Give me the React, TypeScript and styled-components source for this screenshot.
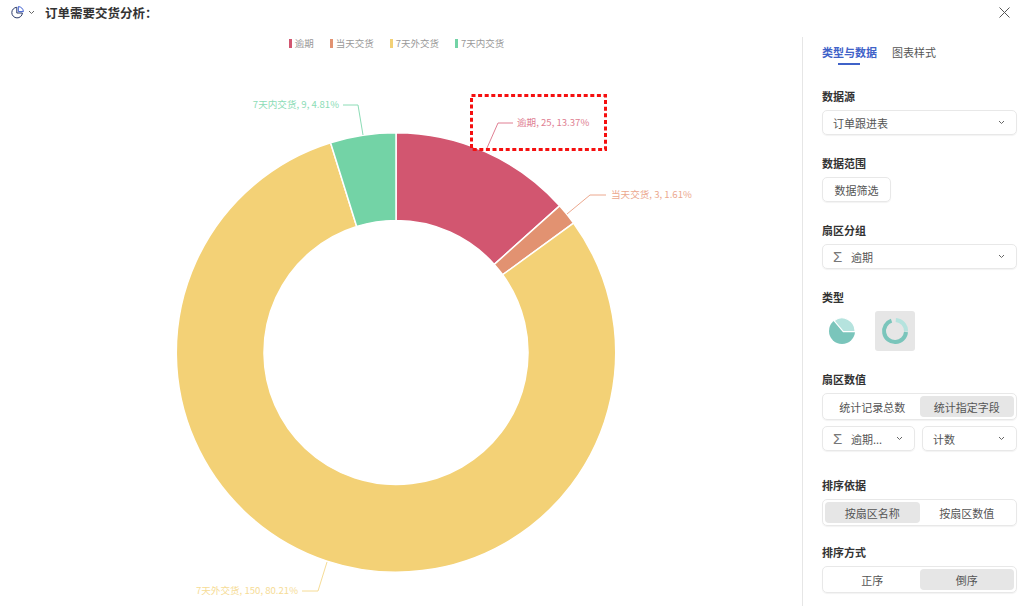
import React from "react";
import styled, { createGlobalStyle } from "styled-components";

const CX = 396;
const CY = 352.5;
const OUTER = 219.7;
const INNER = 132;

const slices = [
  { name: "逾期", value: 25, color: "#d25670" },
  { name: "当天交货", value: 3, color: "#e29271" },
  { name: "7天外交货", value: 150, color: "#f3d176" },
  { name: "7天内交货", value: 9, color: "#73d3a6" },
];

const labels = [
  { text: "逾期, 25, 13.37%", x: 517, y: 126, anchor: "start", color: "#e07f93", points: "487,148 498,123 513,123" },
  { text: "当天交货, 3, 1.61%", x: 611, y: 198, anchor: "start", color: "#eca88e", points: "567,214 590,195 606,195" },
  { text: "7天外交货, 150, 80.21%", x: 298, y: 594, anchor: "end", color: "#f6dc96", points: "327,562 318,591 302,591" },
  { text: "7天内交货, 9, 4.81%", x: 339, y: 108, anchor: "end", color: "#8cdcb6", points: "363,135 358,105 343,105" },
];

const polar = (r: number, deg: number) => {
  const a = ((deg - 90) * Math.PI) / 180;
  return `${CX + r * Math.cos(a)} ${CY + r * Math.sin(a)}`;
};

const arcPath = (from: number, to: number) => {
  const large = to - from > 180 ? 1 : 0;
  return `M${polar(OUTER, from)} A${OUTER} ${OUTER} 0 ${large} 1 ${polar(OUTER, to)} L${polar(INNER, to)} A${INNER} ${INNER} 0 ${large} 0 ${polar(INNER, from)} Z`;
};

const Donut = () => {
  const total = slices.reduce((sum, s) => sum + s.value, 0);
  let angle = 0;
  return (
    <ChartSvg viewBox="0 37 802 569" width={802} height={569}>
      {slices.map((s) => {
        const from = angle;
        angle += (s.value / total) * 360;
        return <path key={s.name} d={arcPath(from, angle)} fill={s.color} stroke="#fff" strokeWidth={1.5} />;
      })}
      {labels.map((l) => (
        <g key={l.text}>
          <polyline points={l.points} fill="none" stroke={l.color} strokeWidth={1} />
          <text x={l.x} y={l.y} textAnchor={l.anchor as "start" | "end"} fill={l.color} fontSize={9.6}>
            {l.text}
          </text>
        </g>
      ))}
      <rect x={471.5} y={95.5} width={134} height={54} fill="none" stroke="#f50f0f" strokeWidth={3} strokeDasharray="4 2.6" />
    </ChartSvg>
  );
};

const Chevron = () => (
  <svg width="7" height="5" viewBox="0 0 7 5" fill="none" stroke="#666" strokeWidth="1">
    <path d="M1 1 L3.5 3.5 L6 1" />
  </svg>
);

const Sigma = () => <SigmaMark>Σ</SigmaMark>;

const App = () => {
  return (
    <Page>
      <GlobalStyle />
      <Header>
        <svg width="13" height="13" viewBox="0 0 13 13" fill="none" strokeWidth="1">
          <path d="M5.8 1.3 A5.3 5.3 0 1 0 11.4 7 L5.8 7 Z" stroke="#2b3a67" />
          <path d="M7.3 0.6 A5.2 5.2 0 0 1 12.4 5.6 L7.3 5.6 Z" stroke="#3f5fd0" />
        </svg>
        <HeaderChevron>
          <Chevron />
        </HeaderChevron>
        <Title>订单需要交货分析：</Title>
        <CloseButton>
          <svg width="11" height="11" viewBox="0 0 11 11" stroke="#555" strokeWidth="1">
            <path d="M0.5 0.5 L10.5 10.5 M10.5 0.5 L0.5 10.5" />
          </svg>
        </CloseButton>
      </Header>
      <Body>
        <ChartArea>
          <Legend>
            {slices.map((s) => (
              <LegendItem key={s.name}>
                <LegendMark $color={s.color} />
                {s.name}
              </LegendItem>
            ))}
          </Legend>
          <Donut />
        </ChartArea>
        <Sidebar>
          <Tabs>
            <Tab $active>类型与数据</Tab>
            <Tab>图表样式</Tab>
          </Tabs>
          <Section $top={18}>
            <Label>数据源</Label>
            <Select>
              <SelectText>订单跟进表</SelectText>
              <Chevron />
            </Select>
          </Section>
          <Section $top={21}>
            <Label>数据范围</Label>
            <FilterButton>数据筛选</FilterButton>
          </Section>
          <Section $top={21}>
            <Label>扇区分组</Label>
            <Select>
              <SelectText>
                <Sigma />
                逾期
              </SelectText>
              <Chevron />
            </Select>
          </Section>
          <Section $top={21}>
            <Label>类型</Label>
            <TypeRow>
              <TypeOption>
                <svg width="28" height="28" viewBox="0 0 28 28">
                  <circle cx="14" cy="14" r="13" fill="#7ac5bb" />
                  <path d="M6 3.7 A13 13 0 0 1 27 14.6 L15.3 14.6 Z" fill="#b5e3de" stroke="#fff" strokeWidth="1.2" />
                </svg>
              </TypeOption>
              <TypeOption $selected>
                <svg width="28" height="28" viewBox="0 0 28 28" fill="none" strokeWidth="4">
                  <path d="M14.8 3 A11 11 0 0 1 25 14.5" stroke="#b5e3de" />
                  <path d="M25 15 A11 11 0 1 1 10.5 3.6" stroke="#7ac5bb" />
                </svg>
              </TypeOption>
            </TypeRow>
          </Section>
          <Section $top={21}>
            <Label>扇区数值</Label>
            <Segmented>
              <Segment>统计记录总数</Segment>
              <Segment $active>统计指定字段</Segment>
            </Segmented>
            <SplitRow>
              <Select>
                <SelectText>
                  <Sigma />
                  逾期...
                </SelectText>
                <Chevron />
              </Select>
              <Select>
                <SelectText>计数</SelectText>
                <Chevron />
              </Select>
            </SplitRow>
          </Section>
          <Section $top={27}>
            <Label>排序依据</Label>
            <Segmented>
              <Segment $active>按扇区名称</Segment>
              <Segment>按扇区数值</Segment>
            </Segmented>
          </Section>
          <Section $top={19}>
            <Label>排序方式</Label>
            <Segmented>
              <Segment>正序</Segment>
              <Segment $active>倒序</Segment>
            </Segmented>
          </Section>
        </Sidebar>
      </Body>
    </Page>
  );
};

const GlobalStyle = createGlobalStyle`
  html, body {
    margin: 0;
    padding: 0;
    background: #fff;
    overflow: hidden;
  }
  body {
    font-family: "Noto Sans CJK SC", "Noto Sans", "Liberation Sans", sans-serif;
  }
`;

const Page = styled.div`
  width: 1024px;
  height: 606px;
  display: flex;
  flex-direction: column;
  overflow: hidden;
`;

const Header = styled.div`
  height: 37px;
  flex-shrink: 0;
  box-sizing: border-box;
  padding: 0 14px 12px 11px;
  display: flex;
  align-items: center;
`;

const HeaderChevron = styled.span`
  display: flex;
  margin-left: 4px;
`;

const Title = styled.div`
  margin-left: 10px;
  font-size: 12.5px;
  font-weight: 700;
  color: #333;
`;

const CloseButton = styled.div`
  margin-left: auto;
  display: flex;
`;

const Body = styled.div`
  flex: 1;
  display: flex;
  min-height: 0;
`;

const ChartArea = styled.div`
  position: relative;
  width: 802px;
  flex-shrink: 0;
`;

const ChartSvg = styled.svg`
  position: absolute;
  left: 0;
  top: 0;
  font-family: "Noto Sans CJK SC", sans-serif;
`;

const Legend = styled.div`
  height: 13px;
  display: flex;
  justify-content: center;
  gap: 16px;
  padding-right: 9px;
`;

const LegendItem = styled.div`
  display: flex;
  align-items: center;
  gap: 3px;
  font-size: 9.5px;
  line-height: 13px;
  color: #999;
`;

const LegendMark = styled.span<{ $color: string }>`
  width: 3px;
  height: 9px;
  background: ${(p) => p.$color};
`;

const Sidebar = styled.div`
  flex: 1;
  box-sizing: border-box;
  border-left: 1px solid #e6e6e6;
  padding: 0 7px 0 19px;
  display: flex;
  flex-direction: column;
`;

const Tabs = styled.div`
  display: flex;
  gap: 15px;
  height: 27px;
  padding-top: 7px;
  box-sizing: content-box;
`;

const Tab = styled.div<{ $active?: boolean }>`
  position: relative;
  font-size: 11px;
  line-height: 16px;
  font-weight: ${(p) => (p.$active ? 700 : 400)};
  color: ${(p) => (p.$active ? "#3f62c8" : "#555")};
  ${(p) =>
    p.$active &&
    `&::after {
      content: "";
      position: absolute;
      left: 16px;
      top: 19px;
      width: 22px;
      height: 2px;
      background: #3f62c8;
    }`}
`;

const Section = styled.div<{ $top: number }>`
  margin-top: ${(p) => p.$top}px;
  display: flex;
  flex-direction: column;
`;

const Label = styled.div`
  font-size: 11px;
  line-height: 14px;
  font-weight: 700;
  color: #333;
  margin-bottom: 7px;
`;

const Select = styled.div`
  height: 25px;
  flex-shrink: 0;
  box-sizing: border-box;
  border: 1px solid #e8e8e8;
  border-radius: 5px;
  box-shadow: 0 1px 1px rgba(0, 0, 0, 0.05);
  padding: 0 11px 0 10px;
  display: flex;
  align-items: center;
  justify-content: space-between;
`;

const SelectText = styled.span`
  display: flex;
  align-items: center;
  font-size: 11px;
  color: #555;
`;

const SigmaMark = styled.span`
  width: 18px;
  font-family: "Liberation Sans", sans-serif;
  font-size: 15px;
  line-height: 15px;
  color: #777;
`;

const FilterButton = styled.div`
  width: 69px;
  height: 25px;
  box-sizing: border-box;
  border: 1px solid #e8e8e8;
  border-radius: 5px;
  box-shadow: 0 1px 1px rgba(0, 0, 0, 0.05);
  display: flex;
  align-items: center;
  justify-content: center;
  font-size: 11px;
  color: #555;
`;

const TypeRow = styled.div`
  display: flex;
`;

const TypeOption = styled.div<{ $selected?: boolean }>`
  width: 40px;
  height: 40px;
  margin-right: 13px;
  border-radius: 3px;
  display: flex;
  align-items: center;
  justify-content: center;
  background: ${(p) => (p.$selected ? "#e6e6e6" : "transparent")};
`;

const Segmented = styled.div`
  height: 27px;
  box-sizing: border-box;
  padding: 2px;
  border: 1px solid #e8e8e8;
  border-radius: 5px;
  box-shadow: 0 1px 1px rgba(0, 0, 0, 0.05);
  display: flex;
`;

const Segment = styled.div<{ $active?: boolean }>`
  flex: 1;
  display: flex;
  align-items: center;
  justify-content: center;
  border-radius: 4px;
  font-size: 11px;
  color: #555;
  background: ${(p) => (p.$active ? "#e6e6e6" : "transparent")};
`;

const SplitRow = styled.div`
  margin-top: 6px;
  display: grid;
  grid-template-columns: 93px 1fr;
  gap: 7px;
`;

export default App;
